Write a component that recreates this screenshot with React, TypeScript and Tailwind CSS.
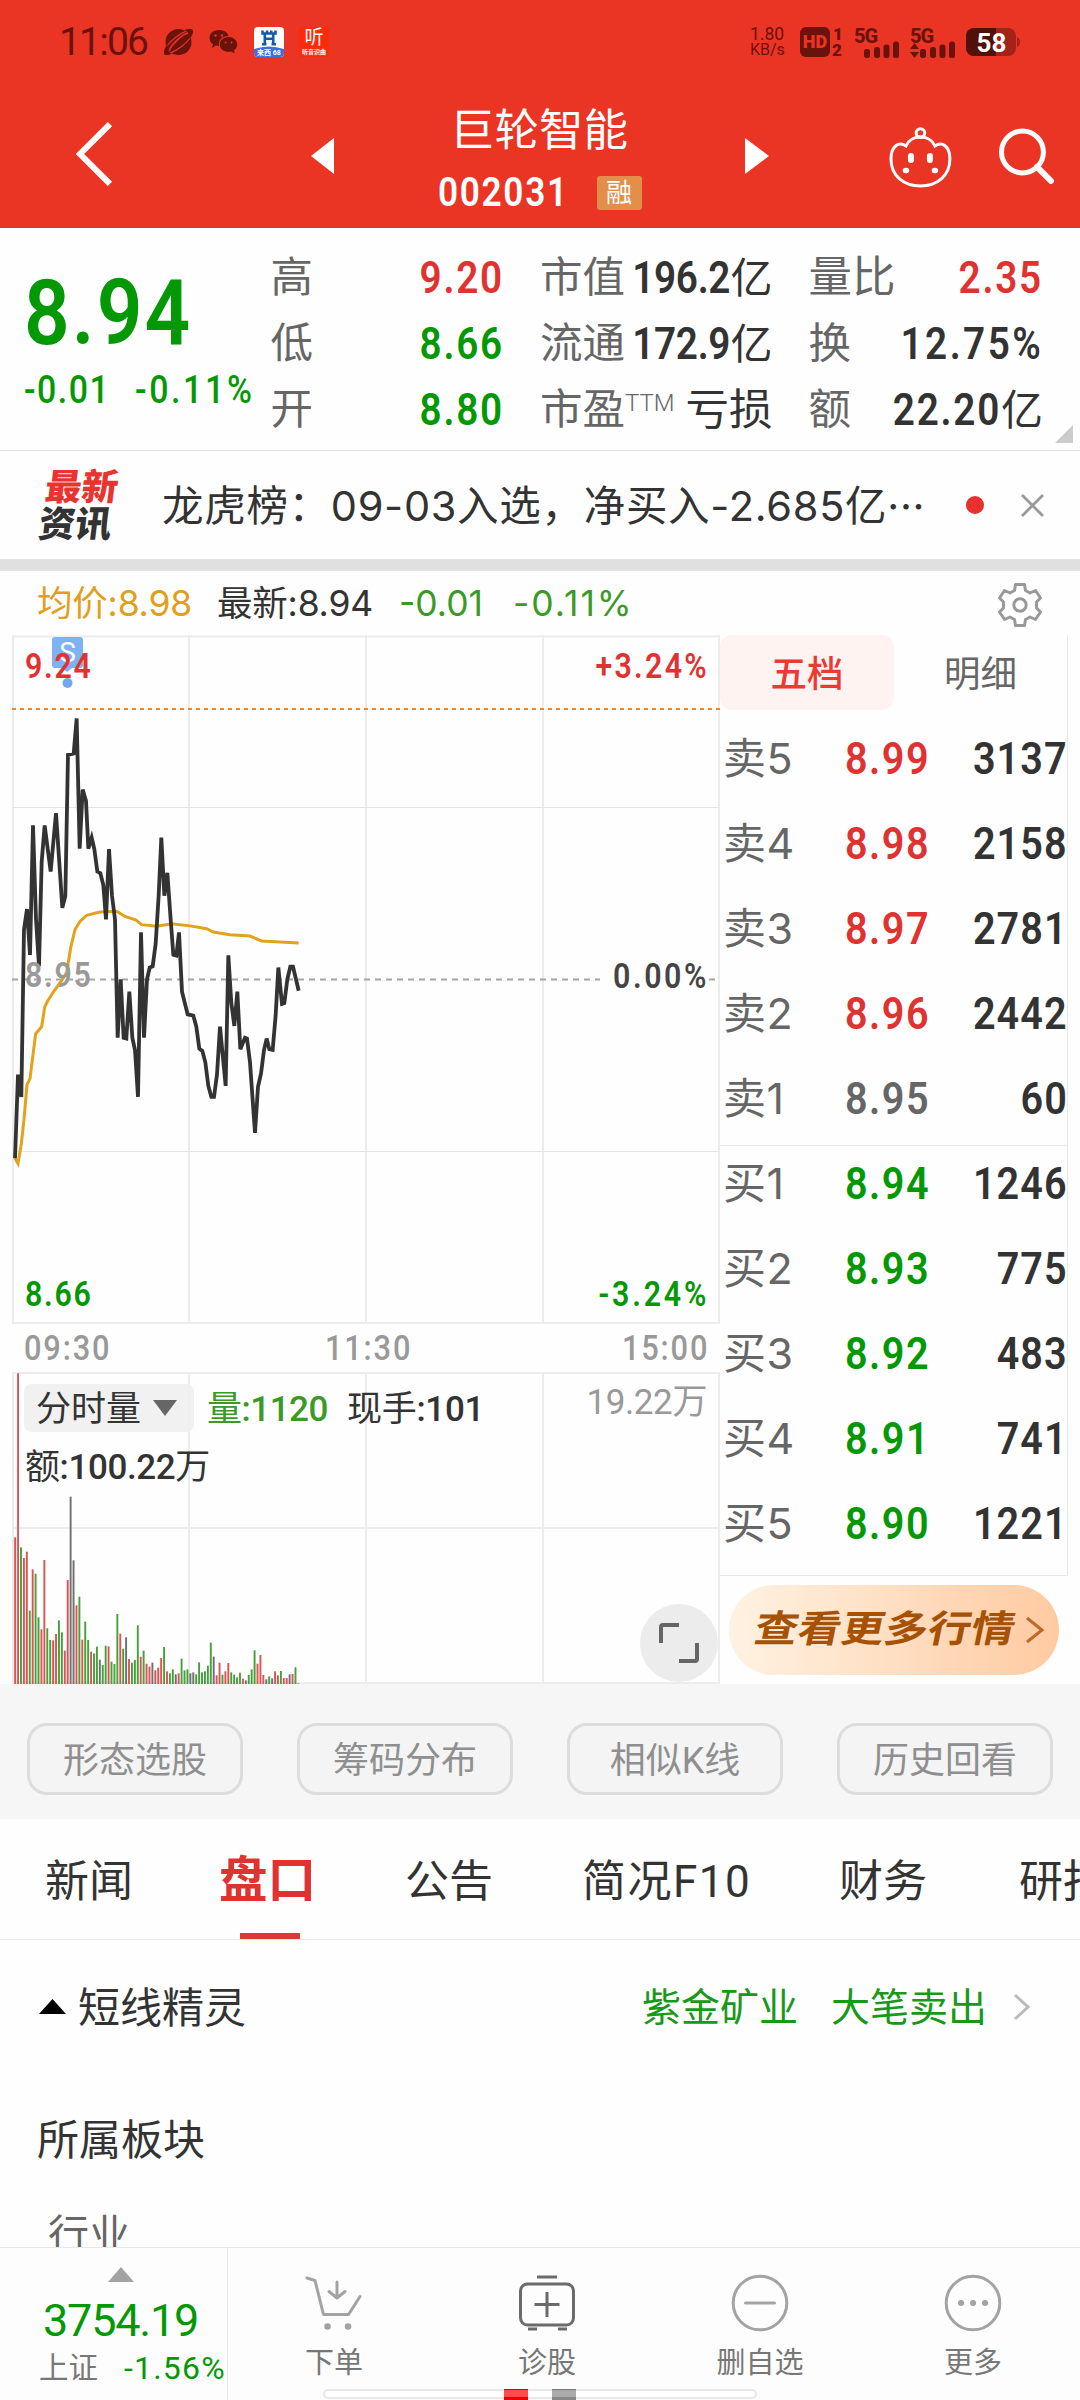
import type { ReactNode } from 'react';

type Tone = 'up' | 'down' | 'flat';

const toneText: Record<Tone, string> = {
  up: 'text-[#e03331]',
  down: 'text-[#059805]',
  flat: 'text-[#666666]',
};

const asks: [string, string, string, Tone][] = [
  ['卖5', '8.99', '3137', 'up'],
  ['卖4', '8.98', '2158', 'up'],
  ['卖3', '8.97', '2781', 'up'],
  ['卖2', '8.96', '2442', 'up'],
  ['卖1', '8.95', '60', 'flat'],
];

const bids: [string, string, string, Tone][] = [
  ['买1', '8.94', '1246', 'down'],
  ['买2', '8.93', '775', 'down'],
  ['买3', '8.92', '483', 'down'],
  ['买4', '8.91', '741', 'down'],
  ['买5', '8.90', '1221', 'down'],
];

const tools = ['形态选股', '筹码分布', '相似K线', '历史回看'];

// Minute prices, in a 3 : 2.45 scaled space (see the group transform)
const pricePoints =
  '45,1465 54,1260 64,1315 72,905 81,855 90,967 99,650 108,880 117,995 125,740 134,650 152,763 168,620 187,852 196,823 204,477 221,474 230,388 239,707 248,562 258,590 265,707 275,680 283,708 292,763 301,767 310,796 318,880 327,708 336,822 345,880 353,1170 362,1027 371,1170 379,1172 388,1057 397,1170 405,1200 414,1315 423,912 432,1170 441,1027 449,998 458,995 467,940 476,822 484,680 493,822 502,766 512,880 520,967 529,969 537,912 546,1057 563,1113 580,1116 589,1143 598,1197 607,1202 616,1230 625,1288 634,1315 642,1315 651,1260 660,1143 677,1288 685,968 694,1085 703,1141 712,1057 721,1198 735,1170 741,1172 750,1230 765,1403 774,1290 783,1258 792,1200 800,1172 808,1198 818,1200 827,1115 835,998 846,1087 853,1085 862,1027 871,996 879,996 888,1027 896,1055';
const averagePoints =
  '45,1465 54,1478 64,1430 72,1370 81,1285 90,1270 107,1160 125,1143 134,1095 143,1080 160,1058 187,1027 200,1010 212,950 225,905 240,885 260,870 300,862 350,860 375,873 408,882 425,893 470,897 515,891 570,896 620,903 640,911 690,918 750,921 785,933 896,938';

// One bar a minute: height in thirds of a pixel and colour
const volumes =
  '440r 932r 410g 378r 397r 220g 344r 331g 200g 164r 372r 167g 132g 131r 150r 191g 155g 100r 312r 562k 371k 236r 262g 133r 187g 132g 97r 92g 112g 73k 57g 115g 113r 67g 60g 210g 151r 106g 140k 75r 64g 72g 176g 82r 100g 61r 52r 64k 41r 49r 78r 111g 38r 32g 44g 29k 32r 76g 41g 44g 32k 35k 29g 65g 35g 38g 55g 124g 82k 26r 64r 28g 38r 63r 35g 28g 20g 34g 16r 11k 27g 44g 101g 61r 87r 27r 14k 23g 17k 38r 26r 39g 18r 18r 29k 30r 50g 2g'
    .split(' ')
    .map((v) => ({ h: parseInt(v, 10) / 3, tone: v.slice(-1) }));

const barColor: Record<string, string> = { r: '#dd5353', g: '#45a03c', k: '#6f6f6f' };

// Narrow figures: the digits are squeezed, the spacing opens them up again
function Num({ children, className = '', left }: { children: string; className?: string; left?: boolean }) {
  return <span className={`inline-block scale-x-[0.88] ${left ? 'origin-left' : 'origin-right'} ${className}`}>{children}</span>;
}

function StatusBar() {
  return (
    <div className="flex h-[84px] items-center pl-[59px] pr-[60px] text-[#6a120c]">
      <span className="w-[104px] text-[39px] leading-none tracking-[-1.8px]">11:06</span>
      <svg width="31" height="28" viewBox="0 0 31 28" fill="currentColor">
        <circle cx="15.5" cy="14" r="13" />
        <ellipse cx="15.500" cy="14" rx="17.300" ry="5.500" transform="rotate(-38 15.500 14)" fill="none" stroke="#ea3525" strokeWidth="1.200" />
        <path d="M4.500 16C0 22 0 27 3 27C5 27.500 8 26 9 25.500C6 25 4 21 4.500 16ZM26.500 11C31 6 31 1 28 1C26 .5 23 1.500 21 2.500C25 3 27 7 26.500 11Z" />
        <path d="M7 22.500C5.500 19.500 18 7 25 5" stroke="#ea3525" strokeWidth="1.800" fill="none" />
      </svg>
      <svg className="ml-[15px]" width="30" height="26" viewBox="0 0 30 26" fill="currentColor">
        <path d="M10 1C4.500 1 .5 4.600.5 9c0 2.600 1.300 4.700 3.400 6.100L3 19l3.800-2.400c1 .3 2 .4 3.200.4C9 11 13 7 19.500 7 18.700 3.500 15 1 10 1Z" />
        <path d="M19.500 8c-5 0-8.700 3.300-8.700 7.400s3.700 7.400 8.700 7.400c1 0 2-.1 2.900-.4l3.300 2-.8-3.100c2-1.400 3.300-3.500 3.300-5.900C28.200 11.300 24.500 8 19.500 8Z" />
        <g fill="#ea3525">
          <circle cx="6.500" cy="6.500" r="1.200" />
          <circle cx="13" cy="6.500" r="1.200" />
          <circle cx="16.500" cy="13.500" r="1" />
          <circle cx="22.500" cy="13.500" r="1" />
        </g>
      </svg>
      <svg className="ml-[15px]" width="30" height="30" viewBox="0 0 30 30">
        <clipPath id="app">
          <rect width="30" height="30" rx="4" />
        </clipPath>
        <g clipPath="url(#app)">
          <rect width="30" height="30" fill="#fff" />
          <path d="M0 22Q15 17 30 22V30H0Z" fill="#3c6fe0" />
        </g>
        <path d="M8.500 3.500V6.500H21.500V3.500M13 3.500V6M17.200 3.500V6M10.800 6V17M19.200 6V17M10 11.800H20M8 17.200H12.500M17.500 17.200H22" stroke="#1559a8" strokeWidth="2.600" fill="none" />
        <text x="15" y="28" fontSize="7" fontWeight="700" fill="#fff" textAnchor="middle">来西 68</text>
      </svg>
      <span className="ml-[15px] flex h-[30px] w-[30px] flex-col items-center rounded bg-[#fb2a08] text-white">
        <span className="text-[19px] leading-[21px]">听</span>
        <span className="text-[6px] font-bold leading-[7px]">听音识曲</span>
      </span>

      <div className="ml-auto flex items-center">
        <span className="w-[50px] text-[17.500px] leading-[15px]">
          <span className="block">1.80</span>
          <span className="block text-[16px]">KB/s</span>
        </span>
        <span className="flex h-[30px] w-[30px] items-center justify-center rounded-[6px] bg-current">
          <span className="text-[18px] font-black leading-none text-[#ea3525]">HD</span>
        </span>
        <span className="ml-[2px] w-[22px] text-[17px] font-black leading-[16px]">
          <span className="block pl-[1px]">1</span>
          <span className="block">2</span>
        </span>
        <Signal />
        <span className="w-[10px]" />
        <Signal arrows />
        <svg className="ml-[10px]" width="54" height="28" viewBox="0 0 54 28">
          <rect width="50" height="28" rx="8" fill="#a5221a" />
          <path d="M8 0H30V28H8A8 8 0 0 1 0 20V8A8 8 0 0 1 8 0Z" fill="#52100b" />
          <path d="M51 9Q54 10 54 14T51 19Z" fill="#a5221a" />
          <text x="25.500" y="23.500" fontSize="26" fontWeight="700" fill="#fff" textAnchor="middle">58</text>
        </svg>
      </div>
    </div>
  );
}

function Signal({ arrows }: { arrows?: boolean }) {
  return (
    <svg className="overflow-visible" width="46" height="31" viewBox="0 0 46 31" fill="currentColor">
      <text x="0" y="15.500" fontSize="20" fontWeight="800" letterSpacing="-1">5G</text>
      <rect x="10" y="22" width="6" height="9" rx="2.500" />
      <rect x="20" y="20" width="6" height="11" rx="2.500" />
      <rect x="29.500" y="17.500" width="6" height="13.500" rx="2.500" />
      <rect x="39" y="14.500" width="6" height="16.500" rx="2.500" />
      {arrows && <path d="M0 22 4.500 16 9 22ZM0 25H9L4.500 31Z" />}
    </svg>
  );
}

function Header() {
  return (
    <header className="h-[228px] bg-[#ea3525] text-white">
      <StatusBar />
      <div className="flex h-[144px] pl-[75px] pr-[25px]">
        <svg className="mt-[37px]" width="40" height="66" viewBox="0 0 40 66" fill="none" stroke="#fff" strokeWidth="6">
          <path d="M35 3 5 33 35 63" />
        </svg>
        <svg className="ml-[196px] mt-[54px]" width="23" height="36" fill="#fff">
          <path d="M23 0V36L0 18Z" />
        </svg>
        <div className="flex w-[411px] flex-col items-center pt-[22px]">
          <h1 className="text-[44.500px] leading-[50px]">巨轮智能</h1>
          <div className="mt-[15px] flex items-center pl-[1px]">
            <span className="w-[127px]"><Num left className="text-[40px] font-semibold leading-[44px] tracking-[1.900px]">002031</Num></span>
            <span className="ml-[32px] flex h-[34px] w-[45px] items-center justify-center rounded-[3px] bg-[#e38e4a] text-[26px] leading-none">融</span>
          </div>
        </div>
        <svg className="ml-[1px] mt-[54px]" width="24" height="36" fill="#fff">
          <path d="M0 0V36L24 18Z" />
        </svg>
        <svg className="ml-[120px] mt-[42px]" width="63" height="62" viewBox="0 0 63 62" fill="none" stroke="#fff" strokeWidth="3">
          <circle cx="31.500" cy="7" r="4.300" />
          <path d="M17 20C22 8 41 8 46 20C53 15 61 20 61 33C61 50 48 60 31.500 60S2 50 2 33C2 20 10 15 17 20Z" />
          <path d="M22 30v4M41 30v4" strokeWidth="6" strokeLinecap="round" />
          <path d="M16.500 44.500h1M45.500 44.500h1" strokeWidth="5.500" strokeLinecap="round" />
        </svg>
        <svg className="ml-[47px] mt-[44px]" width="56" height="56" viewBox="0 0 56 56" fill="none" stroke="#fff" strokeWidth="5">
          <circle cx="23.500" cy="24" r="21" />
          <path d="M38 39 52 53" strokeWidth="6" strokeLinecap="round" />
        </svg>
      </div>
    </header>
  );
}

function Stat({ label, children, className = '' }: { label: ReactNode; children: ReactNode; className?: string }) {
  return (
    <div className="flex h-[66px] items-center justify-between whitespace-nowrap">
      <span className="w-0 text-[42.500px] leading-none text-[#666]">{label}</span>
      <span className={`text-[44px] font-semibold leading-none ${className}`}>{children}</span>
    </div>
  );
}

function Cjk({ children }: { children: string }) {
  return <span className="text-[42px] font-normal">{children}</span>;
}

function Quote() {
  return (
    <section className="relative flex h-[223px] border-b border-[#e0e0e0] pl-[24px] pr-[37px] pt-[17px]">
      <div className="w-[247px] font-semibold text-[#059805]">
        <p className="mt-[22px] text-[91px] leading-[92px]">
          <Num left className="tracking-[2.400px]">8.94</Num>
        </p>
        <p className="mt-[7px] flex text-[38.500px] font-medium leading-[48px]">
          <span className="w-[111px]"><Num left className="tracking-[1.700px]">-0.01</Num></span>
          <span className="w-[120px]"><Num left className="tracking-[3px]">-0.11%</Num></span>
        </p>
      </div>
      <div className="w-[234px]">
        <Stat label="高" className="text-[#e03331]"><Num className="tracking-[2px]">9.20</Num></Stat>
        <Stat label="低" className="text-[#059805]"><Num className="tracking-[2px]">8.66</Num></Stat>
        <Stat label="开" className="text-[#059805]"><Num className="tracking-[2px]">8.80</Num></Stat>
      </div>
      <div className="ml-[36px] w-[233px]">
        <Stat label="市值" className="text-[#333]"><Num className="tracking-[-0.400px]">196.2</Num><Cjk>亿</Cjk></Stat>
        <Stat label="流通" className="text-[#333]"><Num className="tracking-[-0.400px]">172.9</Num><Cjk>亿</Cjk></Stat>
        <Stat label={<span className="flex items-start">市盈<span className="mt-[2px] text-[24px] font-light leading-none">TTM</span></span>} className="text-[#333]"><span className="text-[43.500px] font-normal">亏损</span></Stat>
      </div>
      <div className="ml-[36px] w-[235px]">
        <Stat label={<span className="text-[43.500px]">量比</span>} className="text-[#e03331]"><Num className="tracking-[2px]">2.35</Num></Stat>
        <Stat label="换" className="text-[#333]"><Num className="tracking-[2.800px]">12.75%</Num></Stat>
        <Stat label="额" className="text-[#333]"><Num className="tracking-[2px]">22.20</Num><Cjk>亿</Cjk></Stat>
      </div>
      <svg className="absolute bottom-[7px] right-[7px]" width="18" height="18" fill="#ccc">
        <path d="M18 0V18H0Z" />
      </svg>
    </section>
  );
}

function News() {
  return (
    <section className="flex h-[120px] items-center border-b-[12px] border-[#e0e0e0] pl-[41px]">
      <div className="w-[121px] -skew-x-[7deg] pt-[2px] text-[36.500px] font-black leading-[36.500px]">
        <span className="block pl-[2px] text-[#e8332f]">最新</span>
        <span className="block text-[#333]">资讯</span>
      </div>
      <p className="w-[767px] whitespace-nowrap pt-[3px] font-['Inter','Noto_Sans_CJK_SC',sans-serif] text-[41.500px] leading-none tracking-[0.700px] text-[#333]">龙虎榜：09-03入选，净买入-2.685亿···</p>
      <span className="ml-[37px] h-[18px] w-[18px] rounded-full bg-[#e8302e]" />
      <svg className="ml-[37px]" width="23" height="23" stroke="#999" strokeWidth="2.800">
        <path d="M1 1 22 22M22 1 1 22" />
      </svg>
    </section>
  );
}

function QuoteLine() {
  return (
    <div className="flex h-[64px] items-center pl-[37px] pr-[37px] pt-[2px] font-['Inter','Noto_Sans_CJK_SC',sans-serif] text-[35.500px] leading-none">
      <span className="w-[180px] tracking-[-0.200px] text-[#e0a01c]">均价:8.98</span>
      <span className="w-[182px] tracking-[-0.200px] text-[#333]">最新:8.94</span>
      <span className="w-[114px] text-[#3a9a25]">-0.01</span>
      <span className="tracking-[2px] text-[#3a9a25]">-0.11%</span>
      <svg className="ml-auto mt-[2px]" width="46" height="46" viewBox="0 0 46 46" fill="none" stroke="#999" strokeWidth="3" strokeLinejoin="round">
        <path d="M18.500 2.500H27.500L28.500 8.500L33 11L38.500 8.500L43.500 16L39.500 20V26L43.500 30L38.500 37.500L33 35L28.500 37.500L27.500 43.500H18.500L17.500 37.500L13 35L7.500 37.500L2.500 30L6.500 26V20L2.500 16L7.500 8.500L13 11L17.500 8.500Z" />
        <circle cx="23" cy="23" r="6.200" />
      </svg>
    </div>
  );
}

function PriceChart() {
  return (
    <div className="relative h-[689px] text-[34.500px] font-semibold leading-[36px]">
      <svg className="block" width="720" height="689" viewBox="0 0 720 689" fill="none">
        <path d="M13 1.500H719M13 688H719" stroke="#ececec" strokeWidth="2" />
        <path d="M13 0V689M189 0V689M366 0V689M543 0V689M719 0V689" stroke="#ececec" strokeWidth="2" />
        <path d="M13 172.500H719M13 516.500H719" stroke="#e4e4e4" />
        <path d="M12 74H720" stroke="#f0862a" strokeWidth="2" strokeDasharray="4 4" />
        <path d="M12 344.500H600M709 344.500H716" stroke="#a5a5a5" strokeWidth="2" strokeDasharray="6 5" />
        <g transform="translate(0 -75) scale(.33333 .40833)">
          <polyline points={averagePoints} stroke="#e3a11c" strokeWidth="3" vectorEffect="non-scaling-stroke" />
          <polyline points={pricePoints} stroke="#333" strokeWidth="3.800" vectorEffect="non-scaling-stroke" />
        </g>
        <path d="M55 2H80Q83 2 83 5V30Q83 33 80 33H72L67 37L62 33H55Q52 33 52 30V5Q52 2 55 2Z" fill="#7fb2f3" />
        <circle cx="67.500" cy="48" r="5" fill="#6fa8ef" />
        <text x="67.500" y="27" fontSize="28" fontWeight="400" fill="#fff" textAnchor="middle">S</text>
      </svg>
      <Num left className="absolute left-[25px] top-[13px] tracking-[2px] text-[#e03331]">9.24</Num>
      <Num className="absolute right-[11px] top-[13px] tracking-[2.600px] text-[#e03331]">+3.24%</Num>
      <Num left className="absolute left-[25px] top-[322px] tracking-[2px] text-[#999]">8.95</Num>
      <Num className="absolute right-[11px] top-[323px] tracking-[2.900px] text-[#444]">0.00%</Num>
      <Num left className="absolute left-[25px] top-[641px] tracking-[2px] text-[#059805]">8.66</Num>
      <Num className="absolute right-[11px] top-[641px] tracking-[3.200px] text-[#059805]">-3.24%</Num>
    </div>
  );
}

function VolumeChart() {
  return (
    <div className="relative h-[312px] text-[35px] font-medium leading-[36px] text-[#333]">
      <svg className="block" width="720" height="312" viewBox="0 0 720 312">
        <path d="M13 1H719M13 156H719M13 311H719M13 0V312M189 0V312M366 0V312M543 0V312M719 0V312" stroke="#ececec" strokeWidth="2" />
        {volumes.map((v, i) => (
          <rect key={i} x={14.2 + i * 2.92} y={312 - v.h} width="1.900" height={v.h} fill={barColor[v.tone]} />
        ))}
      </svg>
      <div className="absolute left-[24px] top-[12px] flex h-[48px] items-center">
        <span className="flex h-[48px] w-[170px] items-center rounded-lg bg-[#f0f0f0]/90 pl-[12px] font-normal">
          <span className="pt-[3px]">分时量</span>
          <svg className="ml-[12px]" width="24" height="16" fill="#666">
            <path d="M0 0H24L12 16Z" />
          </svg>
        </span>
        <span className="ml-[13px] w-[140px] pt-[3px] tracking-[-0.500px] text-[#3a9a25]"><span className="font-normal">量</span>:1120</span>
        <span className="pt-[3px] tracking-[-0.300px]"><span className="font-normal">现手</span>:101</span>
      </div>
      <span className="absolute left-[25px] top-[78px] tracking-[-0.400px]"><span className="font-normal">额</span>:100.22<span className="font-normal">万</span></span>
      <span className="absolute right-[13px] top-[13px] font-normal tracking-[-0.400px] text-[#999]">19.22万</span>
      <span className="absolute left-[640px] top-[232px] flex h-[78px] w-[78px] items-center justify-center rounded-full bg-[#ececec]">
        <svg width="40" height="40" fill="none" stroke="#666" strokeWidth="4">
          <path d="M2 20V4Q2 2 4 2H20M38 20V36Q38 38 36 38H20" />
        </svg>
      </span>
    </div>
  );
}

function Level({ row: [name, price, volume, tone] }: { row: [string, string, string, Tone] }) {
  return (
    <div className="flex h-[85px] items-center pl-[3px] pt-[2px] text-[45px] font-semibold leading-none">
      <span className="w-[122px] font-['Inter','Noto_Sans_CJK_SC',sans-serif] text-[43px] font-normal tracking-[0.500px] text-[#666]">{name}</span>
      <Num left className={`tracking-[1.700px] ${toneText[tone]}`}>{price}</Num>
      <Num className="-mr-[1px] ml-auto tracking-[1.200px] text-[#333]">{volume}</Num>
    </div>
  );
}

function OrderBook() {
  return (
    <div className="w-[360px]">
      <div className="h-[941px] w-[348px] border-b border-r border-[#e8e8e8]">
        <div className="flex h-[75px] text-[36.500px] leading-none">
          <span className="flex w-[174px] items-center justify-center rounded-xl bg-[#fff3f2] pt-[5px] font-medium text-[#ea3b33]">五档</span>
          <span className="flex flex-1 items-center justify-center pt-[5px] text-[#666]">明细</span>
        </div>
        <div className="mt-[5px] h-[431px] border-b border-[#ececec]">
          {asks.map((row) => <Level key={row[0]} row={row} />)}
        </div>
        <div className="-mt-[6px]">
          {bids.map((row) => <Level key={row[0]} row={row} />)}
        </div>
      </div>
      <div className="ml-[9px] mt-[9px] flex h-[90px] w-[330px] items-center rounded-full bg-gradient-to-r from-[#fff2e2] to-[#ffcaa1] pl-[26px]">
        <span className="-skew-x-[10deg] scale-y-[0.86] whitespace-nowrap text-[43.300px] font-bold leading-none text-[#a65104]">查看更多行情</span>
        <svg className="ml-[10px] shrink-0" width="20" height="28" fill="none" stroke="#bb6a27" strokeWidth="3">
          <path d="M2 2 17 14 2 26" />
        </svg>
      </div>
    </div>
  );
}

function Tabs() {
  return (
    <nav className="flex h-[121px] items-center overflow-hidden whitespace-nowrap border-b border-[#e8e8e8] pl-[45px] text-[44px] leading-none text-[#333]">
      <span className="w-[174px] shrink-0 pt-[5px]">新闻</span>
      <span className="relative flex h-full w-[186px] shrink-0 items-center pt-[5px] text-[48.500px] font-bold text-[#e03331]">
        盘口
        <span className="absolute bottom-0 left-[21px] h-[6px] w-[60px] bg-[#dd3834]" />
      </span>
      <span className="w-[177px] shrink-0 pt-[5px]">公告</span>
      <span className="w-[257px] shrink-0 pt-[5px] tracking-[1.500px]">简况F10</span>
      <span className="w-[180px] shrink-0 pt-[5px]">财务</span>
      <span className="shrink-0 pt-[5px]">研报</span>
    </nav>
  );
}

function BottomItem({ label, children }: { label: string; children: ReactNode }) {
  return (
    <div className="flex flex-1 flex-col items-center pr-[1px] pt-[26px] text-[29px] leading-none text-[#777]">
      <svg width="58" height="58" viewBox="0 0 58 58" fill="none" stroke="#a3a3a3" strokeWidth="3" strokeLinecap="round" strokeLinejoin="round">
        {children}
      </svg>
      <span className="mt-[17px]">{label}</span>
    </div>
  );
}

function BottomBar() {
  return (
    <footer className="relative flex h-[153px] overflow-hidden border-t border-[#e8e8e8] bg-[#fdfdfd]">
      <div className="w-[228px] border-r border-[#e8e8e8] pl-[39px]">
        <svg className="ml-[69px] mt-[19px]" width="26" height="15" fill="#a3a3a3">
          <path d="M0 15H26L13 0Z" />
        </svg>
        <p className="ml-[4px] mt-[16px] text-[45px] leading-[46px] tracking-[-1.200px] text-[#059805]">3754.19</p>
        <p className="mt-[7px] flex items-center whitespace-nowrap leading-[34px]">
          <span className="w-[85px] text-[29.500px] text-[#777]">上证</span>
          <span className="text-[32px] tracking-[1.200px] text-[#059805]">-1.56%</span>
        </p>
      </div>
      <BottomItem label="下单">
        <path d="M2 4 10 6.500 18.500 40.500H43.500L55 22.500M32 8V24M24 17.500 32 24 40 17.500" />
        <path d="M22.500 52.500h.1M43 52.500h.1" strokeWidth="6.500" />
      </BottomItem>
      <BottomItem label="诊股">
        <path d="M19 3H39M10 55H19M40 55H49" stroke="#6b6b6b" strokeLinecap="butt" />
        <rect x="2.500" y="10" width="53" height="41" rx="7" stroke="#6b6b6b" />
        <path d="M29 18V43M16.500 30.500H41.500" stroke="#6b6b6b" strokeLinecap="butt" />
      </BottomItem>
      <BottomItem label="删自选">
        <circle cx="29" cy="29" r="26.800" />
        <path d="M14.500 29H43.500" />
      </BottomItem>
      <BottomItem label="更多">
        <circle cx="29" cy="29" r="26.800" />
        <path d="M17 29h.1M29 29h.1M41 29h.1" strokeWidth="6" />
      </BottomItem>
      <div className="absolute left-[323px] top-[141px] h-[10px] w-[434px] rounded-full border-2 border-[#e8e8e8] bg-white" />
      <div className="absolute left-[504px] top-[141px] h-[12px] w-[24px] border-b-4 border-t border-b-[#ea0000] border-t-[#a02020] bg-[#ff4b4b]" />
      <div className="absolute left-[552px] top-[141px] h-[12px] w-[24px] border-b-4 border-t border-b-[#888] border-t-[#777] bg-[#ababab]" />
    </footer>
  );
}

export default function App() {
  return (
    <main className="flex h-[2400px] w-[1080px] flex-col overflow-hidden bg-[#fefefe] font-['Roboto','Noto_Sans_CJK_SC',sans-serif]">
      <Header />
      <Quote />
      <News />
      <QuoteLine />
      <section className="flex h-[1049px]">
        <div className="w-[720px]">
          <PriceChart />
          <div className="flex h-[48px] items-center justify-between pl-[24px] pr-[11px] text-[35px] font-medium leading-none tracking-[2.100px] text-[#999]">
            <Num left>09:30</Num>
            <Num className="-translate-x-[4px]">11:30</Num>
            <Num>15:00</Num>
          </div>
          <VolumeChart />
        </div>
        <OrderBook />
      </section>
      <section className="grid h-[135px] grid-cols-4 justify-items-center bg-[#f6f6f6] pt-[39px]">
        {tools.map((tool) => (
          <button key={tool} className="flex h-[72px] w-[216px] items-center justify-center rounded-[20px] border-[3px] border-[#dddddd] bg-[#f4f4f4] pt-[3px] text-[36px] leading-none text-[#8f8f8f]">
            {tool}
          </button>
        ))}
      </section>
      <Tabs />
      <section className="min-h-0 flex-1 overflow-hidden text-[42px] leading-none text-[#333]">
        <div className="flex h-[134px] items-center pl-[39px] pr-[50px]">
          <svg className="mr-[12px] mt-[-2px]" width="27" height="15">
            <path d="M0 15H27L13.500 0Z" />
          </svg>
          <span className="pt-[3px]">短线精灵</span>
          <span className="ml-auto pt-[3px] text-[39px] text-[#18991a]">紫金矿业</span>
          <span className="ml-[33px] pt-[3px] text-[39px] text-[#18991a]">大笔卖出</span>
          <svg className="ml-[26px]" width="17" height="28" fill="none" stroke="#bbb" strokeWidth="3">
            <path d="M2 2 15 14 2 26" />
          </svg>
        </div>
        <h2 className="flex h-[132px] items-center pl-[37px] pt-[1px]">所属板块</h2>
        <p className="pl-[48px] pt-[9px] text-[41px] text-[#666]">行业</p>
      </section>
      <BottomBar />
    </main>
  );
}
